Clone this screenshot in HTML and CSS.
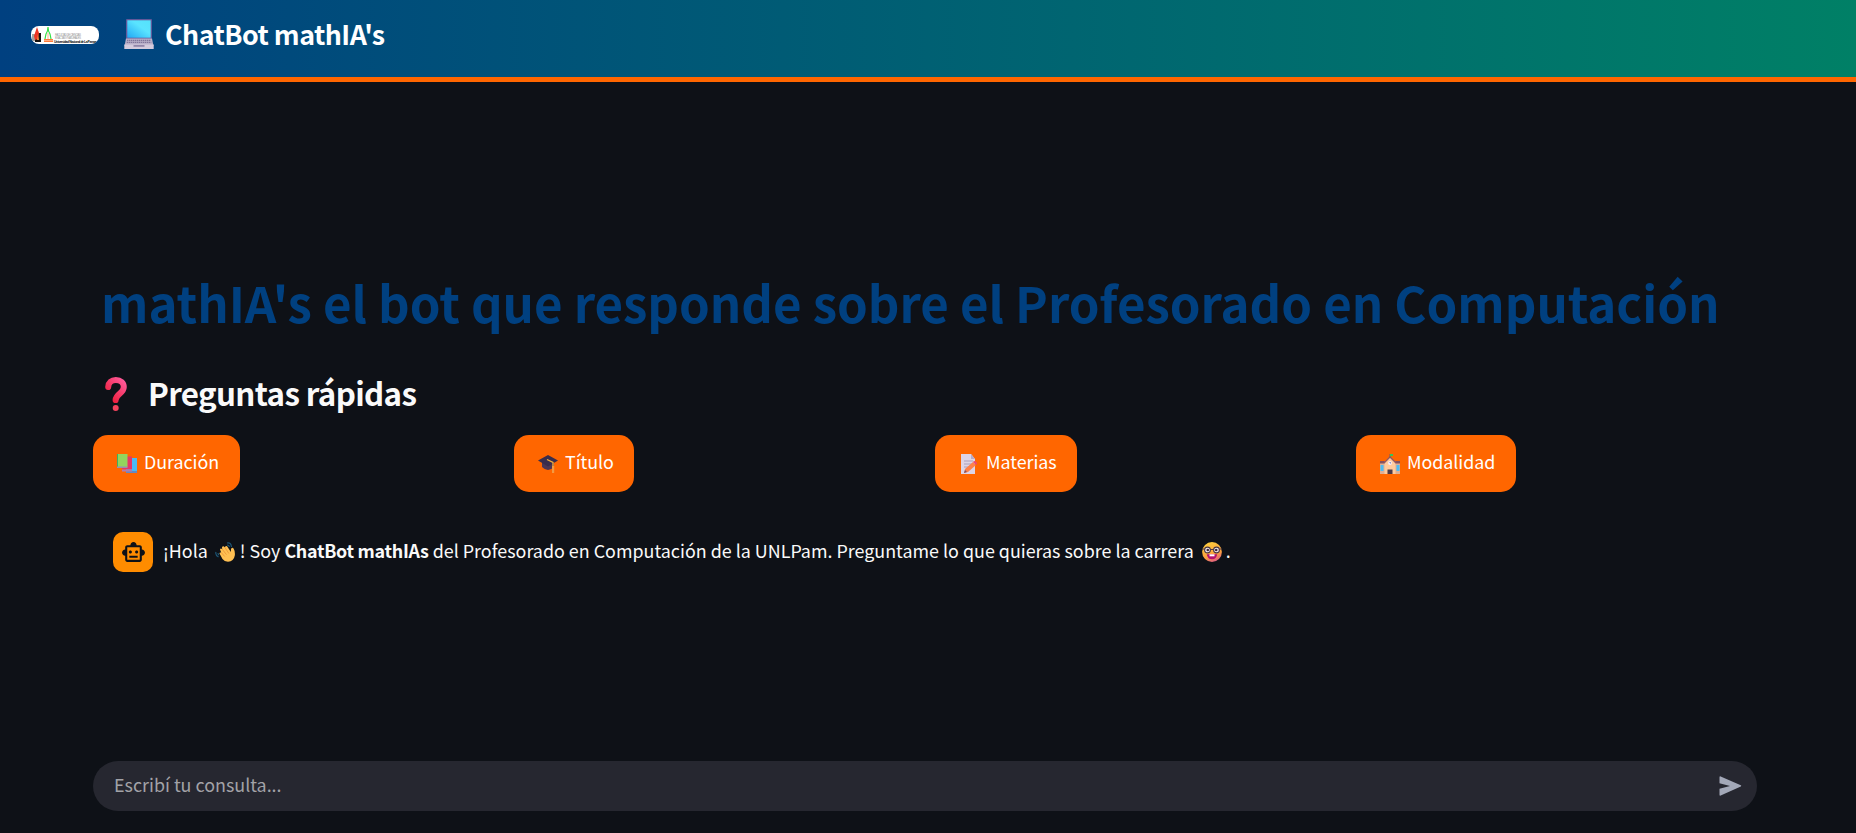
FILE: index.html
```html
<!DOCTYPE html>
<html lang="es">
<head>
<meta charset="utf-8">
<title>ChatBot mathIA's</title>
<link rel="stylesheet" href="styles.css">
</head>
<body>
<header class="topbar">
  <svg class="logo" viewBox="0 0 68 17.5" width="68" height="17.5">
    <rect x="1" y="8" width="4" height="7" fill="#a6a19c"/><rect x="4" y="7" width="6" height="9" fill="#15100f"/>
    <path d="M6 1l2 6-1 6-3 1-1-4z" fill="#ee3424"/><path d="M7 8l1 6H6z" fill="#ff8a3d"/>
    <path d="M17 1q0 4-2 7l-1 5M17 1q0 4 2 7l1 5" fill="none" stroke="#35df45" stroke-width="1.2"/>
    <path d="M17 7v6" stroke="#ffb48c"/><path d="M13 13h9v3h-9z" fill="#ff7a3c"/><path d="M13 14.5h9" stroke="#ffd1b5" stroke-width=".6"/>
    <text class="logo-line" x="24" y="9.7" textLength="26">FACULTAD DE CIENCIAS</text>
    <text class="logo-line" x="24" y="12.7" textLength="26">EXACTAS Y NATURALES</text>
    <text class="logo-name" x="23" y="17" textLength="43">Universidad Nacional de La Pampa</text>
  </svg>
  <svg class="laptop" viewBox="0 0 30 30" width="30" height="30">
    <defs><linearGradient id="screen" x1="0" y1="1" x2="1" y2="0"><stop offset="0" stop-color="#22a9f4"/><stop offset=".6" stop-color="#5ae4ff"/><stop offset="1" stop-color="#55e2fb"/></linearGradient></defs>
    <rect x="2" y="0" width="26" height="20" rx="1" fill="#62589a"/><rect x="3.3" y="1.3" width="23.4" height="17.4" fill="url(#screen)"/>
    <path d="M2 19.5h26l1.5 7.5H.5z" fill="#b9b0c9"/><path d="M3 21.3h24M2.7 23.3h24.6" stroke="#81769b" stroke-width="1.2" stroke-dasharray="1.4 .6"/>
    <path d="M.3 25.5h29.4V30H.3z" fill="#d4cbdd"/><rect x="9.5" y="26" width="11" height="1.8" fill="#9287aa"/>
  </svg>
  <span class="brand">ChatBot mathIA's</span>
</header>
<main class="content">
  <h1 class="title">mathIA's el bot que responde sobre el Profesorado en Computación</h1>
  <h2 class="subtitle">
    <svg class="ask" viewBox="0 0 22 34" width="22" height="34"><defs><linearGradient id="ask" x1="1" y1="0" x2=".2" y2="1"><stop offset="0" stop-color="#ff5a9a"/><stop offset="1" stop-color="#ed1e3c"/></linearGradient></defs><path d="M3.2 10C3.5 5.5 6.5 3.1 10.8 3.1c4.9 0 8 2.800 8 7 0 6.500-7.900 6.500-8.200 13" fill="none" stroke="url(#ask)" stroke-width="6" stroke-linecap="round"/><circle cx="10.7" cy="31" r="3" fill="#f3435d"/></svg>
    <span>Preguntas rápidas</span>
  </h2>
  <div class="quick">
    <div><button class="pill"><svg viewBox="0 0 20 20" width="20" height="20"><path d="M9 4h11v13H9z" fill="#48baf5"/><path d="M9 17h11v2H9z" fill="#6687bf"/><path d="M5 2.5h10v13H5z" fill="#e53666"/><path d="M5 15.5h10v2H5z" fill="#b07cae"/><path d="M0 0h10.5v13H0z" fill="#92d45e"/><path d="M0 0h1v14H0z" fill="#3fae63"/><path d="M0 12.5h10.5V14H0z" fill="#9a8eb1"/></svg><span class="label">Duración</span></button></div>
    <div><button class="pill"><svg viewBox="0 0 20 20" width="20" height="20"><path d="M4 8v5q6 6 12 0V8z" fill="#4d3653"/><path d="M0 6.5L10 1l10 5.5-10 6z" fill="#392d4c"/><path d="M9 5.5l6 3v5" fill="none" stroke="#f5b13d" stroke-width="1.3"/><path d="M14 12h2.2v7H14z" fill="#f39a42"/></svg><span class="label">Título</span></button></div>
    <div><button class="pill"><svg viewBox="0 0 20 20" width="20" height="20"><path d="M2 0h10l4 5v15H2z" fill="#ddd4e6"/><path d="M12 0v5h4z" fill="#b8abc9"/><path d="M5 7h9M5 10h9M5 13h6" stroke="#aaa0bc" stroke-width="1.2"/><path d="M5 19l1-4 8-7 3 3-8 7z" fill="#ff8149"/><path d="M14 8l1-1q3 0 3 3l-1 1z" fill="#ee496d"/><path d="M5 19l1-3 2 2z" fill="#795268"/></svg><span class="label">Materias</span></button></div>
    <div><button class="pill"><svg viewBox="0 0 20 20" width="20" height="20"><path d="M0 9h20v11H0z" fill="#dfae93"/><path d="M0 7h20v2.5H0z" fill="#87505c"/><path d="M4.5 20V8L10 3l5.5 5v12z" fill="#ffcb9e"/><path d="M4 9l6-6 6 6" fill="none" stroke="#935662" stroke-width="1.4"/><path d="M10 0v4" stroke="#775c60"/><path d="M10 0h3v2h-3z" fill="#35c45a"/><circle cx="10" cy="9" r="1.9" fill="#f5efff"/><path d="M10 8v1h1" fill="none" stroke="#6a5c8a" stroke-width=".7"/><path d="M.5 11h3v6h-3zM16.5 11h3v6h-3z" fill="#4dbbf3"/><path d="M7.5 15.5h5V20h-5z" fill="#4a3947"/></svg><span class="label">Modalidad</span></button></div>
  </div>
  <div class="message">
    <div class="avatar"><svg viewBox="0 0 24 24" width="25" height="25" fill="#0e1117"><path d="M20 9V7c0-1.100-.9-2-2-2h-3c0-1.660-1.340-3-3-3S9 3.340 9 5H6c-1.100 0-2 .9-2 2v2c-1.660 0-3 1.340-3 3s1.340 3 3 3v4c0 1.100.9 2 2 2h12c1.100 0 2-.9 2-2v-4c1.660 0 3-1.340 3-3s-1.340-3-3-3zm-2 10H6V7h12v12zm-9-6c-.83 0-1.500-.67-1.500-1.500S8.170 10 9 10s1.500.67 1.500 1.500S9.830 13 9 13zm7.500-1.500c0 .83-.67 1.500-1.500 1.500s-1.500-.67-1.500-1.500.67-1.500 1.500-1.500 1.500.67 1.500 1.500zM8 15h8v2H8v-2z"/></svg></div>
    <p class="text"><span>¡Hola</span><svg class="wave" viewBox="0 0 20 20" width="20" height="20"><path d="M7.500 17L4.500 11.500q0-1.500 1.700-1L5 7.500q.6-1.600 2.200-.3L7 5q1.300-1.600 2.700.2l.6-.8q1.300-1 2.500.8l3 4.800.2-3q1.300-2.300 2.700-.2 1.600 2.800 1.100 6.700-1 6-6.800 6.300-3.500 0-5.500-2.800z" fill="#ffc052"/><path d="M7.200 7.200l4.300 5.500M9.700 5.200l4.200 6.300M6.200 10.500l3.500 4" stroke="#e58b32" stroke-width=".7"/><path d="M1 10q-1 3 2.500 5M3 11q0 1.500 1 2M12 1q4-1 4.500 4M12 3q2 0 2.500 2" fill="none" stroke="#1c5575" stroke-width="1.200"/></svg><span>! Soy <strong>ChatBot mathIAs</strong> del Profesorado en Computación de la UNLPam. Preguntame lo que quieras sobre la carrera</span><svg class="nerd" viewBox="0 0 20 20" width="20" height="20"><defs><linearGradient id="face" x1=".3" y1="0" x2=".7" y2="1"><stop offset="0" stop-color="#ffce3d"/><stop offset=".65" stop-color="#fb9f40"/><stop offset="1" stop-color="#dc5688"/></linearGradient></defs><circle cx="10" cy="10" r="9.900" fill="url(#face)"/><g fill="#f4eff2" stroke="#4b3743" stroke-width="1.100"><circle cx="5.500" cy="8" r="2.900"/><circle cx="14.500" cy="8" r="2.900"/><path d="M8.500 7.500h3M0 7h2.500M17.500 7H20"/></g><circle cx="5.800" cy="8" r="1.300" fill="#402536"/><circle cx="14.200" cy="8" r="1.300" fill="#402536"/><path d="M4.800 12.300h10.400q-.6 5-5.200 5t-5.200-5z" fill="#b5106f"/><path d="M7.500 12.300h5v2h-5z" fill="#fff"/></svg><span>.</span></p>
  </div>
</main>
<footer class="composer">
  <input class="field" type="text" placeholder="Escribí tu consulta...">
  <svg class="send" viewBox="0 0 22 20" width="23" height="20"><path d="M0 1.200Q0 0 1.200.4L21.300 9.200q1 .6 0 1.200L1.200 19.600Q0 20 0 18.800V12.700L10.500 10 0 7.300z" fill="#a3a8b8"/></svg>
</footer>
</body>
</html>
```
FILE: styles.css
```css
* { box-sizing: border-box; }
body {
  margin: 0;
  height: 833px;
  display: flex;
  flex-direction: column;
  overflow: hidden;
  background: #0e1117;
  color: #fafafa;
  font: 17.9px/30px "Noto Sans CJK SC", "Open Sans", sans-serif;
}
svg { display: block; flex: none; }
.topbar {
  height: 82px;
  flex: none;
  display: flex;
  align-items: flex-start;
  padding-left: 31px;
  border-bottom: 5px solid #ff6600;
  background: linear-gradient(90deg, #004080, #008066);
}
.logo { margin-top: 26px; border-radius: 8px; background: #fff; }
.logo-line { font: 3px "Liberation Sans", sans-serif; fill: #999; }
.logo-name { font: bold 3.4px "Liberation Sans", sans-serif; fill: #111; }
.laptop { margin: 19px 0 0 25px; }
.brand {
  margin: 14px 0 0 11px;
  color: #fff;
  font-size: 26.8px;
  line-height: 40px;
  font-weight: 600;
  letter-spacing: -0.52px;
  white-space: nowrap;
}
.content { flex: 1; padding: 187px 99px 0 93px; }
.title {
  margin: 0 0 0 8px;
  color: #004080;
  font-size: 49.2px;
  line-height: 66px;
  font-weight: 700;
  letter-spacing: -0.02px;
  white-space: nowrap;
}
.subtitle {
  display: flex;
  margin: 37px 0 0 12px;
  gap: 21px;
  align-items: center;
  font-size: 31.3px;
  line-height: 42px;
  font-weight: 600;
  letter-spacing: -0.64px;
}
.ask { margin-top: 2px; }
.quick { display: grid; grid-template-columns: repeat(4, 401px); gap: 20px; margin-top: 21px; }
.pill {
  display: flex;
  align-items: center;
  gap: 7px;
  height: 57px;
  padding: 0 20.5px 0 24px;
  border: 0;
  border-radius: 15px;
  background: #ff6600;
  color: #fff;
  font: inherit;
  letter-spacing: -0.05px;
  white-space: nowrap;
}
.label { padding-bottom: 5px; }
.message { display: flex; align-items: center; margin: 40px 0 0 20px; gap: 10px; }
.avatar { display: grid; place-items: center; width: 40px; height: 40px; border-radius: 10px; background: #ff8c00; }
.text { display: flex; align-items: center; margin: 0; white-space: nowrap; }
.text span { padding-bottom: 4px; }
.text strong { letter-spacing: -0.28px; }
.wave { margin: 0 5px 0 7px; }
.nerd { margin: 0 4px 0 8px; }
.composer {
  display: flex;
  align-items: center;
  flex: none;
  height: 50px;
  margin: 0 99px 22px 93px;
  padding: 0 15px 0 21px;
  border-radius: 25px;
  background: #262730;
}
.field { flex: 1; padding: 0 0 5px; border: 0; outline: 0; background: none; color: #fafafa; font: inherit; }
.field::placeholder { color: #a2a2a7; opacity: 1; }
```
